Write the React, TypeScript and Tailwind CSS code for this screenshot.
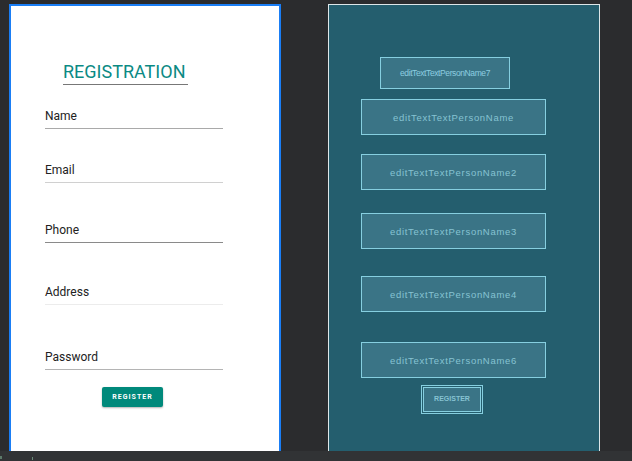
const fields = [
  { label: 'Name', mt: 'mt-[24px]', line: 'border-[#a9a9a9]' },
  { label: 'Email', mt: 'mt-[34px]', line: 'border-[#d0d0d0]' },
  { label: 'Phone', mt: 'mt-[40px]', line: 'border-[#8a8a8a]' },
  { label: 'Address', mt: 'mt-[42px]', line: 'border-[#ececec]' },
  { label: 'Password', mt: 'mt-[45px]', line: 'border-[#b4b4b4]' },
];

const blueprintBoxes = [
  { name: 'editTextTextPersonName', mt: 'mt-[10px]' },
  { name: 'editTextTextPersonName2', mt: 'mt-[19px]' },
  { name: 'editTextTextPersonName3', mt: 'mt-[23px]' },
  { name: 'editTextTextPersonName4', mt: 'mt-[27px]' },
  { name: 'editTextTextPersonName6', mt: 'mt-[30px]' },
];

const App = () => {
  return (
    <div className="w-[632px] h-[461px] bg-[#2b2c2e] flex flex-col overflow-hidden">
      <div className="flex-1 flex items-start pt-[4px] overflow-hidden">
        {/* Design view */}
        <div className="ml-[9px] w-[272px] h-[460px] shrink-0 bg-white border-2 border-b-0 border-[#1a7ef5] font-['Roboto',sans-serif]">
          <div className="ml-[52px] mt-[55px] w-[125px] border-b border-[#777777] text-[18px] leading-[22px] pb-[1px] text-[#0b8a84]">
            REGISTRATION
          </div>

          <div className="ml-[34px] w-[178px]">
            {fields.map((f) => (
              <div
                key={f.label}
                className={`${f.mt} h-[20px] border-b ${f.line} text-[12px] leading-[14px] text-[#222222]`}
              >
                {f.label}
              </div>
            ))}

            <button className="mt-[17px] ml-[57px] w-[61px] h-[20px] rounded-[2px] bg-[#00897b] text-white text-[7px] font-bold tracking-[1px] shadow-[0_1px_2px_rgba(0,0,0,0.3)] flex items-center justify-center">
              REGISTER
            </button>
          </div>
        </div>

        {/* Blueprint view */}
        <div className="ml-[47px] w-[272px] h-[460px] shrink-0 bg-[#245e6e] border border-b-0 border-[#dde6e8] font-['Liberation_Sans',Arial,sans-serif] text-[#86c3d2]">
          <div className="ml-[51px] mt-[52px] w-[130px] h-[32px] bg-[#3a7486] border border-[#86cfe0] flex items-center justify-center pt-[1px]">
            <span className="text-[8.5px] tracking-[-0.4px] text-[#8dcde0]">
              editTextTextPersonName7
            </span>
          </div>

          {blueprintBoxes.map((b) => (
            <div
              key={b.name}
              className={`${b.mt} ml-[32px] w-[185px] h-[36px] bg-[#3a7486] border border-[#86cfe0] flex items-center justify-center pt-[3px] text-[9.5px] tracking-[0.7px]`}
            >
              {b.name}
            </div>
          ))}

          <div className="mt-[7px] ml-[92px] w-[62px] h-[29px] border border-[#86cfe0] p-[1px]">
            <div className="w-full h-full bg-[#3a7486] border border-[#86cfe0] flex items-center justify-center text-[7px] font-bold">
              REGISTER
            </div>
          </div>
        </div>
      </div>

      {/* Status strip */}
      <div className="h-[10px] shrink-0 bg-[#313335] relative">
        <span className="absolute left-0 top-[5px] w-[2px] h-[3px] bg-[#5d7a6a]" />
        <span className="absolute left-[32px] top-[6px] w-[1px] h-[3px] bg-[#6a8a78]" />
      </div>
    </div>
  );
};

export default App;
